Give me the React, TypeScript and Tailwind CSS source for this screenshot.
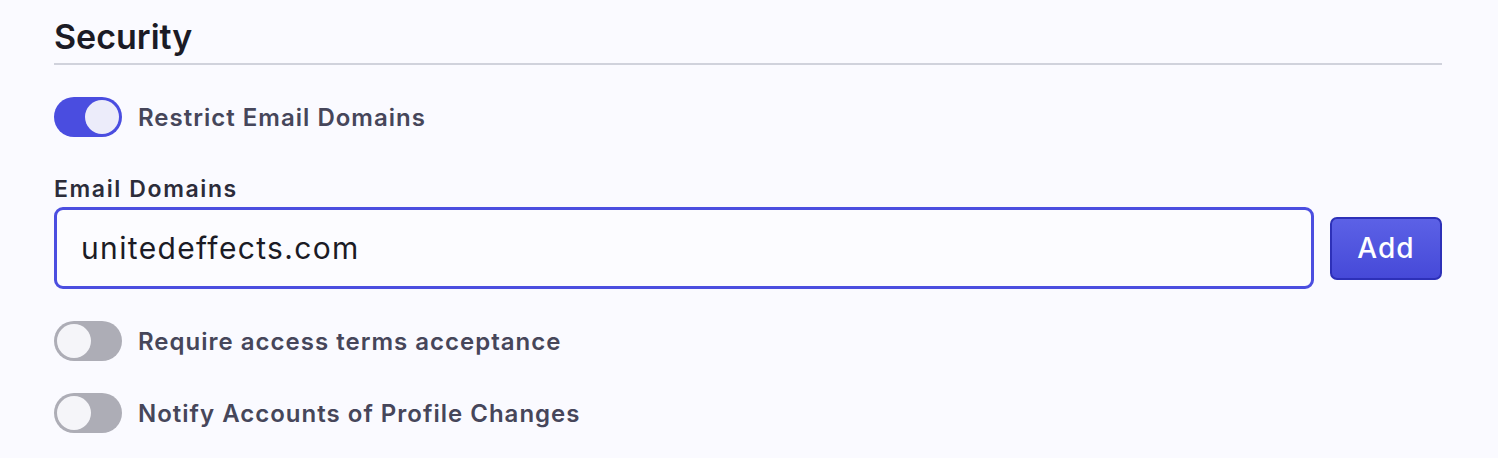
import { useState } from "react";

const Toggle = ({ on, onClick }: { on: boolean; onClick: () => void }) => (
  <button
    type="button"
    onClick={onClick}
    className={`relative flex h-[40px] w-[68px] shrink-0 items-center rounded-full p-[3px] transition-colors ${
      on ? "bg-[#4a4de0]" : "bg-[#adadb6]"
    }`}
  >
    <span
      className={`block h-[34px] w-[34px] rounded-full transition-transform ${
        on ? "translate-x-[28px] bg-[#ececfa]" : "translate-x-0 bg-[#f5f5f9]"
      }`}
    />
  </button>
);

const ToggleRow = ({ label, on, onClick }: { label: string; on: boolean; onClick: () => void }) => (
  <div className="flex items-center gap-4">
    <Toggle on={on} onClick={onClick} />
    <span className="pt-[2px] text-[24px] font-semibold tracking-[0.042em] text-[#46465a]">{label}</span>
  </div>
);

export default function App() {
  const [restrict, setRestrict] = useState(true);
  const [terms, setTerms] = useState(false);
  const [notify, setNotify] = useState(false);
  const [domain, setDomain] = useState("unitedeffects.com");

  return (
    <div className="min-h-screen bg-[#fafaff] pl-[54px] pr-[56px] pt-[15px] font-['Inter',sans-serif]">
      <h2 className="border-b-2 border-[#d0d2dc] pb-[4px] text-[34px] font-semibold leading-[44px] text-[#1b1b25]">
        Security
      </h2>

      <div className="mt-[32px]">
        <ToggleRow label="Restrict Email Domains" on={restrict} onClick={() => setRestrict(!restrict)} />
      </div>

      <label className="mt-[37px] block text-[23px] font-semibold leading-[30px] tracking-[0.07em] text-[#2c2c3a]">
        Email Domains
      </label>
      <div className="mt-[3px] flex items-center gap-4">
        <input
          value={domain}
          onChange={(e) => setDomain(e.target.value)}
          className="h-[82px] flex-1 rounded-[9px] border-[3px] border-[#4b4ee0] bg-[#fcfcff] px-[24px] text-[30px] tracking-[0.045em] text-[#1b1b25] outline-none"
        />
        <button
          type="button"
          className="h-[63px] w-[112px] rounded-[7px] border-2 border-[#2d30b8] bg-gradient-to-b from-[#5c61e6] to-[#4649d8] text-[28px] font-medium tracking-[0.04em] text-white"
        >
          Add
        </button>
      </div>

      <div className="mt-[32px] flex flex-col gap-[32px]">
        <ToggleRow label="Require access terms acceptance" on={terms} onClick={() => setTerms(!terms)} />
        <ToggleRow label="Notify Accounts of Profile Changes" on={notify} onClick={() => setNotify(!notify)} />
      </div>
    </div>
  );
}
